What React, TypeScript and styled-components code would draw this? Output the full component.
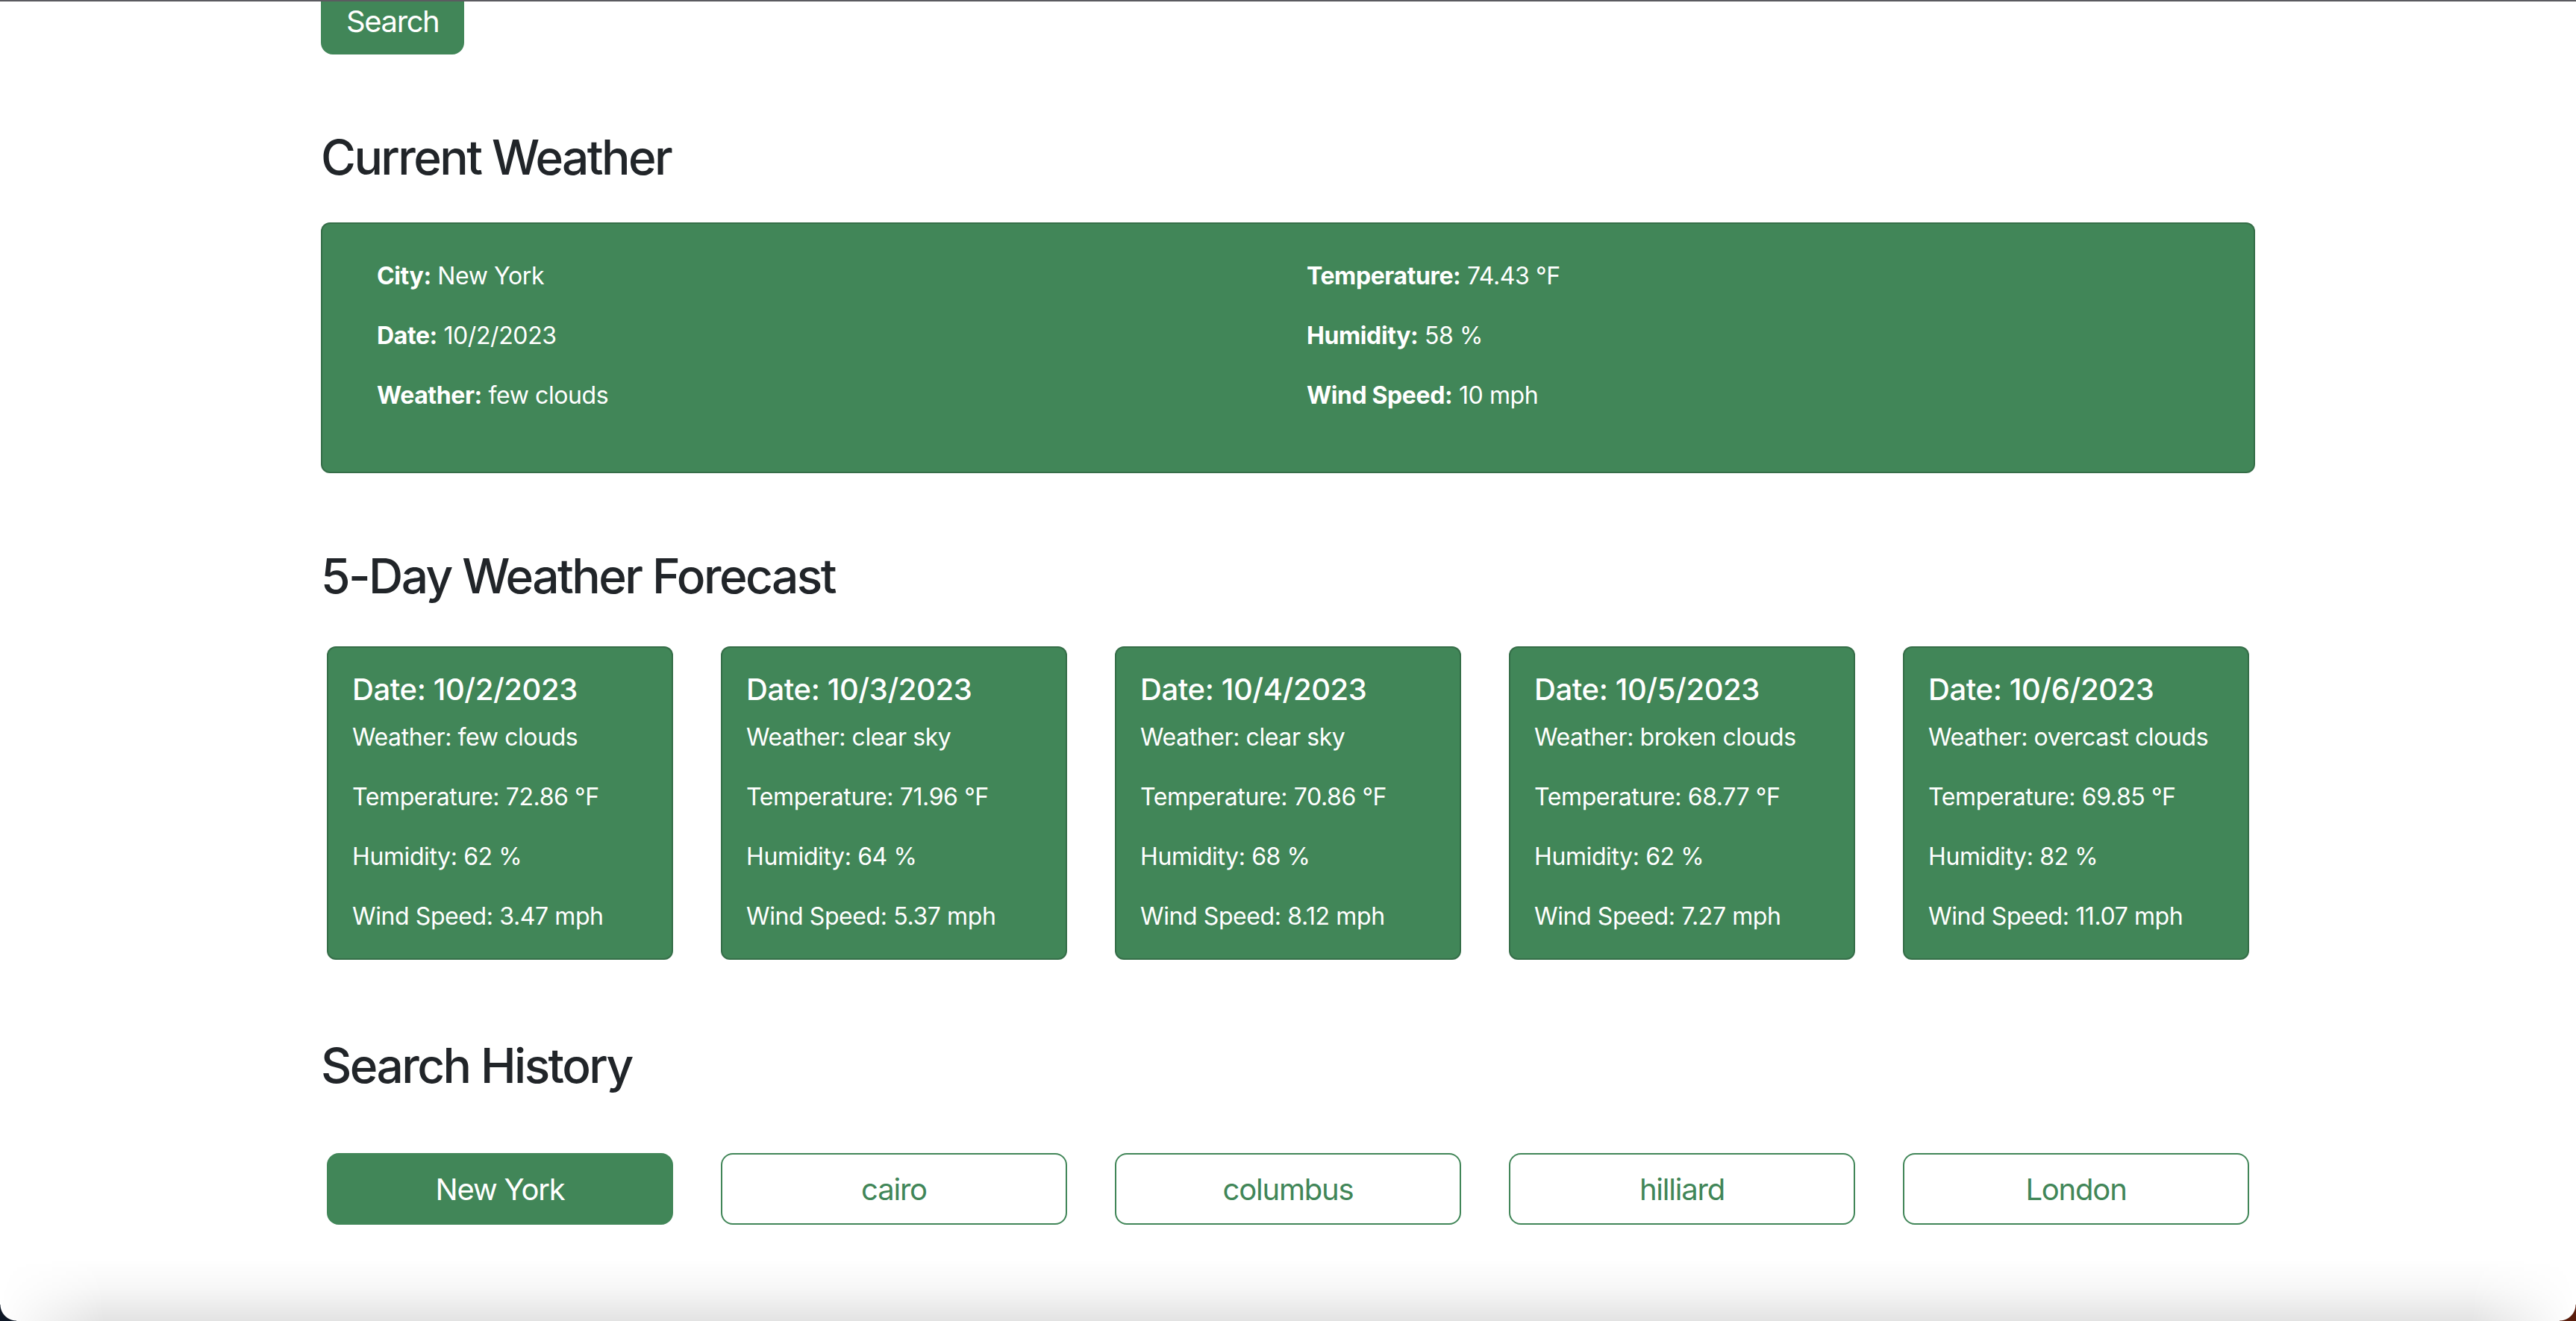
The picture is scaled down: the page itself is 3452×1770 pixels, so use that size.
import React from "react";
import styled, { createGlobalStyle, css } from "styled-components";

const GREEN = "#418658";

const Global = createGlobalStyle`
  html, body {
    margin: 0;
    padding: 0;
    background: #ffffff;
    height: 1770px;
    overflow: hidden;
  }
  body {
    font-family: Inter, "Noto Sans", "Liberation Sans", sans-serif;
    color: #212529;
    letter-spacing: -0.025em;
    -webkit-font-smoothing: antialiased;
  }
  * { box-sizing: border-box; }
`;

const Window = styled.div`
  border-top: 2px solid #5b5b60;
  height: 1770px;
  display: flex;
  flex-direction: column;
`;

const Frame = styled.div`
  overflow: hidden;
  flex: 0 0 auto;
`;

const Container = styled.main`
  width: 2640px;
  margin: 0 auto;
  padding: 0 24px;
`;

const SearchButton = styled.button`
  display: block;
  margin-top: -25px;
  font-family: inherit;
  font-size: 40px;
  letter-spacing: -0.035em;
  line-height: 60px;
  padding: 20px 32px 12px;
  color: #ffffff;
  background: ${GREEN};
  border: 2px solid ${GREEN};
  border-radius: 16px;
  cursor: pointer;
`;

const SectionTitle = styled.h2<{ $top?: number }>`
  margin: ${(p) => p.$top ?? 100}px 0 48px;
  font-size: 64px;
  font-weight: 500;
  letter-spacing: -0.04em;
  line-height: 1.2;
  color: #212529;
`;

const CurrentCard = styled.section`
  background: ${GREEN};
  border: 2px solid rgba(0, 0, 0, 0.175);
  border-radius: 12px;
  padding: 46px 0 46px 73px;
  display: grid;
  grid-template-columns: 1246px 1fr;
  color: #ffffff;
`;

const InfoColumn = styled.div`
  display: flex;
  flex-direction: column;
`;

const InfoLine = styled.p`
  margin: 0 0 32px;
  font-size: 32px;
  line-height: 48px;
`;

const Label = styled.strong`
  font-weight: 700;
`;

const CardRow = styled.div`
  display: grid;
  grid-template-columns: repeat(5, 464px);
  column-gap: 64px;
  padding-left: 8px;
`;

const ForecastRow = styled(CardRow)`
  margin-top: 55px;
`;

const HistoryRow = styled(CardRow)`
  margin-top: 79px;
`;

const ForecastCard = styled.article`
  background: ${GREEN};
  border: 2px solid rgba(0, 0, 0, 0.175);
  border-radius: 12px;
  padding: 32px;
  color: #ffffff;
`;

const ForecastDate = styled.h5`
  margin: 0 0 16px;
  font-size: 40px;
  font-weight: 500;
  line-height: 48px;
`;

const ForecastLine = styled.p`
  margin: 0 0 32px;
  font-size: 32px;
  line-height: 48px;
  &:last-child {
    margin-bottom: 0;
  }
`;

const HistoryButton = styled.button<{ $active?: boolean }>`
  font-family: inherit;
  font-size: 40px;
  letter-spacing: -0.03em;
  line-height: 60px;
  padding: 17px 32px 15px;
  border-radius: 16px;
  border: 2px solid ${GREEN};
  cursor: pointer;
  ${(p) =>
    p.$active
      ? css`
          background: ${GREEN};
          color: #ffffff;
        `
      : css`
          background: #ffffff;
          color: ${GREEN};
        `}
`;

const Shade = styled.div`
  position: relative;
  flex: 1 1 auto;
  &::before {
    content: "";
    position: absolute;
    inset: 0;
    background: linear-gradient(
      to bottom,
      rgba(0, 0, 0, 0) 0%,
      rgba(0, 0, 0, 0) 35%,
      rgba(0, 0, 0, 0.03) 65%,
      rgba(0, 0, 0, 0.11) 100%
    );
    -webkit-mask-image: linear-gradient(
      to right,
      transparent 0,
      #000 140px,
      #000 calc(100% - 140px),
      transparent 100%
    );
    mask-image: linear-gradient(
      to right,
      transparent 0,
      #000 140px,
      #000 calc(100% - 140px),
      transparent 100%
    );
  }
`;

const Corner = styled.span<{ $side: "left" | "right" }>`
  position: absolute;
  bottom: 0;
  width: 22px;
  height: 22px;
  ${(p) =>
    p.$side === "left"
      ? css`
          left: 0;
          background: radial-gradient(
            circle at 22px 0,
            transparent 21px,
            #0e1726 22px
          );
        `
      : css`
          right: 0;
          background: radial-gradient(
            circle at 0 0,
            transparent 21px,
            #5a1d0c 22px
          );
        `}
`;

const current = {
  left: [
    ["City:", "New York"],
    ["Date:", "10/2/2023"],
    ["Weather:", "few clouds"],
  ],
  right: [
    ["Temperature:", "74.43 °F"],
    ["Humidity:", "58 %"],
    ["Wind Speed:", "10 mph"],
  ],
};

const forecast = [
  { date: "10/2/2023", weather: "few clouds", temp: "72.86", hum: "62", wind: "3.47" },
  { date: "10/3/2023", weather: "clear sky", temp: "71.96", hum: "64", wind: "5.37" },
  { date: "10/4/2023", weather: "clear sky", temp: "70.86", hum: "68", wind: "8.12" },
  { date: "10/5/2023", weather: "broken clouds", temp: "68.77", hum: "62", wind: "7.27" },
  { date: "10/6/2023", weather: "overcast clouds", temp: "69.85", hum: "82", wind: "11.07" },
];

const history = ["New York", "cairo", "columbus", "hilliard", "London"];

export default function App() {
  return (
    <>
      <Global />
      <Window>
        <Frame>
          <Container>
            <SearchButton type="button">Search</SearchButton>

            <SectionTitle>Current Weather</SectionTitle>
            <CurrentCard>
              {[current.left, current.right].map((col, i) => (
                <InfoColumn key={i}>
                  {col.map(([label, value]) => (
                    <InfoLine key={label}>
                      <Label>{label}</Label> {value}
                    </InfoLine>
                  ))}
                </InfoColumn>
              ))}
            </CurrentCard>

            <SectionTitle>5-Day Weather Forecast</SectionTitle>
            <ForecastRow>
              {forecast.map((d) => (
                <ForecastCard key={d.date}>
                  <ForecastDate>Date: {d.date}</ForecastDate>
                  <ForecastLine>Weather: {d.weather}</ForecastLine>
                  <ForecastLine>Temperature: {d.temp} °F</ForecastLine>
                  <ForecastLine>Humidity: {d.hum} %</ForecastLine>
                  <ForecastLine>Wind Speed: {d.wind} mph</ForecastLine>
                </ForecastCard>
              ))}
            </ForecastRow>

            <SectionTitle $top={104}>Search History</SectionTitle>
            <HistoryRow>
              {history.map((city, i) => (
                <HistoryButton key={city} type="button" $active={i === 0}>
                  {city}
                </HistoryButton>
              ))}
            </HistoryRow>
          </Container>
        </Frame>
        <Shade>
          <Corner $side="left" />
          <Corner $side="right" />
        </Shade>
      </Window>
    </>
  );
}
